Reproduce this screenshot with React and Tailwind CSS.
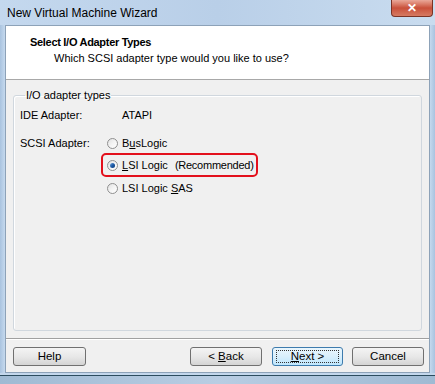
import React from "react";

const font = { fontFamily: '"Liberation Sans", Arial, sans-serif' };

function Radio({ checked }) {
  return (
    <span className="relative flex h-[11px] w-[11px] shrink-0 items-center justify-center rounded-full border border-[#8f8f8f] bg-gradient-to-br from-[#e0e0e0] via-[#f4f4f4] to-[#ffffff]">
      {checked && (
        <span className="h-[5px] w-[5px] rounded-full bg-gradient-to-br from-[#6ea4dc] via-[#1d5aa6] to-[#0e3a75]" />
      )}
    </span>
  );
}

function Btn({ children, w, focused }) {
  return (
    <div
      className={
        "flex h-[19px] items-center justify-center rounded-[3px] border text-[11.5px] leading-none text-black " +
        w +
        " " +
        (focused
          ? "border-[#3d7bad] bg-gradient-to-b from-[#eaf6fd] via-[#d9effc] to-[#bee6fd]"
          : "border-[#707070] bg-gradient-to-b from-[#f4f4f4] via-[#e8e8e8] to-[#d4d4d4]")
      }
    >
      {focused ? (
        <span className="flex h-[13px] w-[63px] items-center justify-center border border-dotted border-[#333]">
          {children}
        </span>
      ) : (
        children
      )}
    </div>
  );
}

export default function App() {
  return (
    <div
      className="flex h-[384px] w-[435px] flex-col overflow-hidden bg-[#bcd2ea] text-[11.5px] text-black"
      style={font}
    >
      {/* Title bar */}
      <div className="flex h-[25px] shrink-0 items-start justify-between bg-gradient-to-r from-[#c4d8ee] via-[#b9cfe8] to-[#c9dcef]">
        <div className="self-center pl-[7px] pt-[1px] text-[12px] leading-none text-black">
          New Virtual Machine Wizard
        </div>
        <div className="mr-[2px] flex h-[17px] w-[42px] items-center justify-center rounded-b-[4px] border border-t-0 border-[#7b3325] bg-gradient-to-b from-[#e9a899] via-[#c9503a] to-[#d67a62] text-[12px] font-bold leading-none text-white">
          ✕
        </div>
      </div>

      {/* Middle */}
      <div className="flex h-[348px] shrink-0">
        <div className="w-[5px] bg-gradient-to-r from-[#a9c3df] to-[#c5d9ee]" />
        <div className="flex w-[425px] flex-col border border-[#8da2b8] bg-[#f0f0f0]">
          {/* Header */}
          <div className="h-[54px] shrink-0 border-b border-[#a8a8a8] bg-white pl-[24px] pt-[8px]">
            <div className="text-[11px] font-bold leading-[16px] tracking-[-0.3px]">Select I/O Adapter Types</div>
            <div className="pl-[24px] text-[11px] leading-[16px]">
              Which SCSI adapter type would you like to use?
            </div>
          </div>

          {/* Body */}
          <div className="flex flex-1 flex-col">
            <div className="px-[7px] pt-[7px]">
              <fieldset className="h-[244px] rounded-[3px] border border-[#d0d7de] pl-[6px] text-[11px] shadow-[inset_1px_1px_0_#fff]">
                <legend className="ml-[5px] px-[1px] text-[11px] leading-[16px]">I/O adapter types</legend>
                <div className="mt-[4px] flex h-[16px] items-center leading-[16px]">
                  <span className="w-[87px]">IDE Adapter:</span>
                  <span className="pl-[15px]">ATAPI</span>
                </div>
                <div className="mt-[12px] flex">
                  <span className="flex h-[16px] w-[87px] items-center">SCSI Adapter:</span>
                  <div className="flex flex-col">
                    <div className="flex h-[16px] items-center gap-[4px]">
                      <Radio />
                      <span>
                        B<span className="underline">u</span>sLogic
                      </span>
                    </div>
                    <div className="relative mt-[6px] flex h-[16px] items-center gap-[4px]">
                      <span className="absolute -bottom-[4px] -left-[6px] -top-[4px] w-[157px] rounded-[5px] border-2 border-[#e3101c]" />
                      <Radio checked />
                      <span>
                        <span className="underline">L</span>SI Logic
                      </span>
                      <span className="ml-[3px] tracking-[-0.25px]">(Recommended)</span>
                    </div>
                    <div className="mt-[7px] flex h-[16px] items-center gap-[4px]">
                      <Radio />
                      <span>
                        LSI Logic <span className="underline">S</span>AS
                      </span>
                    </div>
                  </div>
                </div>
              </fieldset>
            </div>
            <div className="mt-[7px] border-t border-[#a0a0a0] shadow-[0_1px_0_#fff]" />
            <div className="flex pl-[7px] pt-[8px]">
              <Btn w="w-[73px]">Help</Btn>
              <div className="ml-[104px]">
                <Btn w="w-[72px]">
                  &lt; <span className="ml-[3px] underline">B</span>ack
                </Btn>
              </div>
              <div className="ml-[10px]">
                <Btn w="w-[71px]" focused>
                  <span className="underline">N</span>ext &gt;
                </Btn>
              </div>
              <div className="ml-[9px]">
                <Btn w="w-[72px]">Cancel</Btn>
              </div>
            </div>
          </div>
        </div>
        <div className="w-[5px] bg-gradient-to-r from-[#c5d9ee] to-[#a9c3df]" />
      </div>

      {/* Bottom frame */}
      <div className="h-[2px] shrink-0 bg-[#c3d7ec]" />
      <div className="h-[1px] shrink-0 bg-[#2c4c5e]" />
      <div className="flex-1 bg-gradient-to-r from-[#9fbad3] via-[#b8cde3] to-[#9fbad3]" />
    </div>
  );
}
